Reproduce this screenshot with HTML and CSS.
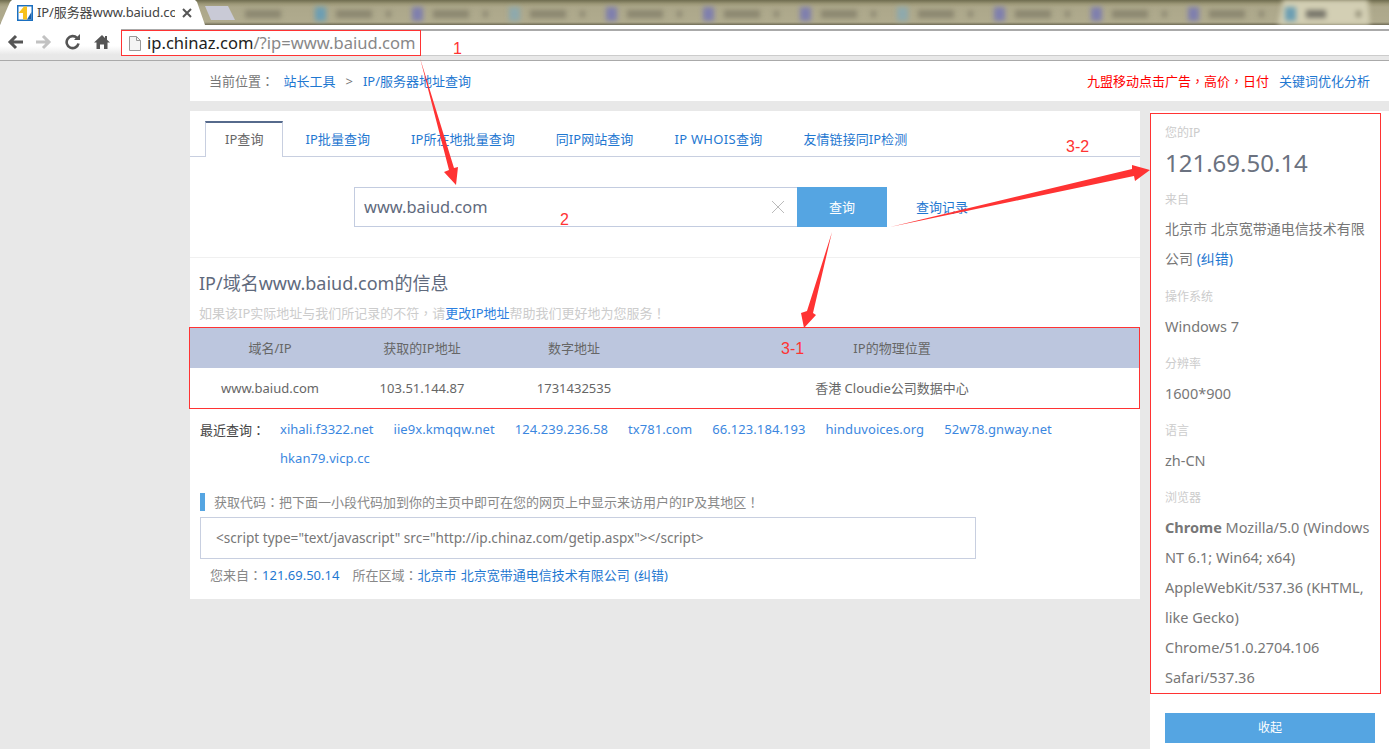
FILE: index.html
```html
<!DOCTYPE html>
<html lang="zh-CN">
<head>
<meta charset="utf-8">
<title>IP/服务器www.baiud.com</title>
<link rel="stylesheet" href="styles.css">
</head>
<body>
<header class="browser">
  <div class="tabstrip">
    <div class="tab">
      <svg class="favicon" width="16" height="16" viewBox="0 0 16 16"><rect width="16" height="16" fill="#1a6fc0"/><rect x="1.500" y="1.500" width="13" height="13" fill="#fff"/><path d="M1.500 8 7 1.500h3v13H6V8z" fill="#f7c11c"/><path d="M10 14.500 14.500 7v7.500z" fill="#1a5fa8"/></svg>
      <span class="tab-title">IP/服务器www.baiud.com</span>
      <svg class="tab-close" width="10" height="10" viewBox="0 0 10 10"><path d="M1 1l8 8M9 1 1 9" stroke="#555" stroke-width="2"/></svg>
    </div>
    <div class="newtab"></div>
    <div class="bgtabs">
      <div class="bgtab first"><span class="bg-text"></span></div>
      <div class="bgtab"><span class="bg-icon teal"></span><span class="bg-text"></span><span class="bg-dot"></span></div>
      <div class="bgtab"><span class="bg-icon purple"></span><span class="bg-text"></span><span class="bg-dot"></span></div>
      <div class="bgtab"><span class="bg-icon steel"></span><span class="bg-text"></span><span class="bg-dot"></span></div>
      <div class="bgtab"><span class="bg-icon purple"></span><span class="bg-text"></span><span class="bg-dot"></span></div>
      <div class="bgtab"><span class="bg-icon purple"></span><span class="bg-text"></span><span class="bg-dot"></span></div>
      <div class="bgtab"><span class="bg-icon purple"></span><span class="bg-text"></span><span class="bg-dot"></span></div>
      <div class="bgtab"><span class="bg-icon steel"></span><span class="bg-text"></span><span class="bg-dot"></span></div>
      <div class="bgtab"><span class="bg-icon purple"></span><span class="bg-text"></span><span class="bg-dot"></span></div>
      <div class="bgtab"><span class="bg-icon purple"></span><span class="bg-text"></span><span class="bg-dot"></span></div>
      <div class="bgtab"><span class="bg-icon purple"></span><span class="bg-text"></span><span class="bg-dot"></span></div>
      <div class="bgtab lit"><span class="bg-icon teal"></span><span class="bg-text short"></span><span class="bg-dot"></span></div>
    </div>
  </div>
  <div class="toolbar">
    <svg class="nav" width="18" height="16" viewBox="0 0 18 16"><path d="M17 8H5M10 2 4 8l6 6" fill="none" stroke="#555" stroke-width="3"/></svg>
    <svg class="nav" width="18" height="16" viewBox="0 0 18 16"><path d="M1 8h12M8 2l6 6-6 6" fill="none" stroke="#c2c2c2" stroke-width="3"/></svg>
    <svg class="nav" width="18" height="16" viewBox="0 0 18 16"><path d="M14.500 9.500A6 6 0 1 1 13 4" fill="none" stroke="#555" stroke-width="2.600"/><path d="M10 6h6V0z" fill="#555"/></svg>
    <svg class="nav" width="18" height="16" viewBox="0 0 18 16"><path d="M9 1 1 8.500h2.500V15H7v-4.500h4V15h3.500V8.500H17l-3-2.800V2h-2v1.900z" fill="#555"/></svg>
    <div class="omnibox">
      <svg class="page-icon" width="12" height="15" viewBox="0 0 12 15"><path d="M.5.500h7l4 4v10H.5z" fill="#f4f4f4" stroke="#999"/><path d="M7.500.500v4h4" fill="none" stroke="#999"/></svg>
      <span class="url"><b>ip.chinaz.com</b>/?ip=www.baiud.com</span>
    </div>
  </div>
</header>

<div class="page">
  <div class="crumbs">
    <div class="crumb-left">当前位置<span class="pu" lang="zh-TW">：</span> <a href="#" class="crumb-link">站长工具</a><span class="crumb-sep">&gt;</span><a href="#">IP/服务器地址查询</a></div>
    <div class="crumb-right"><a href="#" class="red">九盟移动点击广告<span class="pu" lang="zh-TW">，</span>高价<span class="pu" lang="zh-TW">，</span>日付</a><a href="#">关键词优化分析</a></div>
  </div>
  <div class="columns">
    <main class="panel">
      <nav class="tabs">
        <a href="#" class="tabs-item active">IP查询</a>
        <a href="#" class="tabs-item">IP批量查询</a>
        <a href="#" class="tabs-item">IP所在地批量查询</a>
        <a href="#" class="tabs-item">同IP网站查询</a>
        <a href="#" class="tabs-item wide">IP WHOIS查询</a>
        <a href="#" class="tabs-item">友情链接同IP检测</a>
      </nav>
      <div class="search">
        <div class="search-input">
          <span>www.baiud.com</span>
          <svg width="14" height="14" viewBox="0 0 14 14"><path d="M1 1l12 12M13 1 1 13" stroke="#bbb" stroke-width="1"/></svg>
        </div>
        <button class="search-btn">查询</button>
        <a href="#" class="search-log">查询记录</a>
      </div>
      <section class="info">
        <h1>IP/域名www.baiud.com的信息</h1>
        <p class="hint">如果该IP实际地址与我们所记录的不符<span class="pu" lang="zh-TW">，</span>请<a href="#">更改IP地址</a>帮助我们更好地为您服务<span class="pu" lang="zh-TW">！</span></p>
      </section>
      <div class="table">
        <div class="row head"><span>域名/IP</span><span>获取的IP地址</span><span>数字地址</span><span>IP的物理位置</span></div>
        <div class="row"><span>www.baiud.com</span><span>103.51.144.87</span><span>1731432535</span><span>香港 Cloudie公司数据中心</span></div>
      </div>
      <div class="recent">
        <span class="recent-label">最近查询<span class="pu" lang="zh-TW">：</span></span>
        <div class="recent-links">
          <a href="#">xihali.f3322.net</a><a href="#">iie9x.kmqqw.net</a><a href="#">124.239.236.58</a><a href="#">tx781.com</a><a href="#">66.123.184.193</a><a href="#">hinduvoices.org</a><a href="#">52w78.gnway.net</a><a href="#">hkan79.vicp.cc</a>
        </div>
      </div>
      <h2 class="code-title">获取代码<span class="pu" lang="zh-TW">：</span>把下面一小段代码加到你的主页中即可在您的网页上中显示来访用户的IP及其地区<span class="pu" lang="zh-TW">！</span></h2>
      <div class="code-box">&lt;script type="text/javascript" src="http://ip.chinaz.com/getip.aspx"&gt;&lt;/script&gt;</div>
      <p class="origin">您来自<span class="pu" lang="zh-TW">：</span><a href="#">121.69.50.14</a><span class="origin-gap">所在区域<span class="pu" lang="zh-TW">：</span></span><a href="#" class="origin-place">北京市 北京宽带通电信技术有限公司 (纠错)</a></p>
    </main>
    <aside class="side">
      <dl class="side-list">
        <dt>您的IP</dt>
        <dd class="ip">121.69.50.14</dd>
        <dt>来自</dt>
        <dd>北京市 北京宽带通电信技术有限公司 <a href="#">(纠错)</a></dd>
        <dt>操作系统</dt>
        <dd class="latin">Windows 7</dd>
        <dt>分辨率</dt>
        <dd class="latin">1600*900</dd>
        <dt>语言</dt>
        <dd class="latin">zh-CN</dd>
        <dt>浏览器</dt>
        <dd class="latin"><strong>Chrome</strong> Mozilla/5.0 (Windows NT 6.1; Win64; x64) AppleWebKit/537.36 (KHTML, like Gecko) Chrome/51.0.2704.106 Safari/537.36</dd>
      </dl>
      <button class="collapse">收起</button>
    </aside>
  </div>
</div>

<div class="marks">
  <svg class="arrows" width="1389" height="749" viewBox="0 0 1389 749">
    <rect x="121.500" y="30.500" width="299" height="25" fill="none" stroke="#f33"/>
    <rect x="189.500" y="327.500" width="950" height="81" fill="none" stroke="#f33"/>
    <rect x="1150.500" y="113.500" width="230" height="580" fill="none" stroke="#f33"/>
    <polygon points="420,58 454,168 458,167 456,185 444,172 449,170" fill="#f33"/>
    <polygon points="832,232 813,313 816,315 804,328 801,313 807,311" fill="#f33"/>
    <polygon points="890,227 1132,169 1132,165 1150,170 1135,181 1134,176" fill="#f33"/>
  </svg>
  <span class="mark m1">1</span>
  <span class="mark m2">2</span>
  <span class="mark m3">3-1</span>
  <span class="mark m4">3-2</span>
</div>
</body>
</html>
```
FILE: styles.css
```css
* { box-sizing: border-box; }
html, body { margin: 0; padding: 0; }
body {
  background: #e8e8e8;
  color: #666;
  font: 13px/1.5 "Noto Sans", "Noto Sans CJK SC", sans-serif;
  height: 749px;
  overflow: hidden;
  position: relative;
}
a { color: #1f78d1; text-decoration: none; }
.pu { font-family: "Noto Sans CJK TC", sans-serif; }

/* browser chrome */
.browser { height: 61px; }
.tabstrip {
  height: 25px;
  display: flex;
  align-items: flex-end;
  background: linear-gradient(#6f6c4f, #9d9878 4px, #aca78a 7px, #b0ab8e 22px, #6f6b55 25px);
  overflow: hidden;
}
.tab {
  width: 205px;
  height: 25px;
  flex: none;
  background: #fff;
  clip-path: polygon(0 100%, 10px 2px, 12px 0, 195px 0, 197px 2px, 205px 100%);
  display: flex;
  align-items: center;
  padding-left: 17px;
  color: #444;
  font-size: 13px;
}
.favicon { flex: none; }
.tab-title {
  width: 138px;
  margin-left: 4px;
  letter-spacing: -.1px;
  white-space: nowrap;
  overflow: hidden;
}
.tab-close { flex: none; margin-left: 7px; }
.newtab {
  width: 30px;
  height: 14px;
  flex: none;
  margin-bottom: 5px;
  background: #c9cad6;
  clip-path: polygon(0 0, 23px 0, 30px 100%, 6px 100%);
}
.bgtabs {
  display: flex;
  flex: none;
  height: 25px;
  margin-left: 5px;
  filter: blur(2.400px);
}
.bgtab {
  width: 97px;
  height: 25px;
  flex: none;
  display: flex;
  align-items: center;
  padding: 2px 6px 0 7px;
}
.bgtab.first { width: 68px; padding-left: 5px; }
.bgtab.lit { background: #d3cfb4; clip-path: polygon(0 100%, 5px 0, 90px 0, 92px 100%, 97px 100%); }
.bg-icon { width: 11px; height: 14px; flex: none; }
.teal { background: #6c9eb3; }
.purple { background: #7f7fae; }
.steel { background: #8ea9ad; }
.bg-text { width: 36px; height: 8px; margin-left: 10px; background: #8b8770; }
.bgtab.first .bg-text { margin-left: 0; }
.bg-text.short { width: 20px; background: #77756a; }
.bg-dot { width: 5px; height: 6px; margin-left: auto; margin-right: 8px; background: #8b8770; }

.toolbar {
  height: 36px;
  display: flex;
  align-items: flex-start;
  padding: 0 0 0 6px;
  gap: 11px;
  background: linear-gradient(#fff 60%, #e8e8e8 85%);
  border-bottom: 1px solid #aaa;
}
.nav { flex: none; margin-top: 9px; }
.omnibox {
  flex: 1;
  height: 27px;
  margin: 4px 0 0 -1px;
  border-top: 2px solid #aaa;
  border-bottom: 1px solid #ccc;
  background: #fff;
  display: flex;
  align-items: center;
  padding-left: 8px;
}
.page-icon { flex: none; }
.url { margin-left: 6px; font-size: 16.560px; color: #888; white-space: nowrap; }
.url b { font-weight: 400; color: #222; }

/* layout */
.page { padding-left: 190px; }
.crumbs {
  height: 40px;
  background: #fff;
  display: flex;
  justify-content: space-between;
  align-items: center;
  padding: 0 19px 0 19px;
  color: #777;
}
.crumb-link { margin-left: 6px; }
.crumb-sep { margin: 0 10px; color: #777; }
.crumb-right .red { color: #f00; margin-right: 10px; }
.columns { display: flex; gap: 10px; margin-top: 10px; align-items: flex-start; }
.panel { width: 950px; height: 488px; background: #fff; padding-top: 10px; }

/* tabs */
.tabs {
  height: 36px;
  border-bottom: 1px solid #c8cfe0;
  display: flex;
  padding-left: 15px;
  gap: 1px;
}
.tabs-item { padding: 0 20px; line-height: 36px; height: 36px; white-space: nowrap; letter-spacing: .05px; }
.tabs-item.wide { letter-spacing: .3px; }
.tabs-item.active {
  padding: 0 19px;
  border: 1px solid #c8cfe0;
  border-top: 2px solid #566a8c;
  border-bottom: 0;
  background: #fff;
  color: #666;
  line-height: 32px;
  margin-right: 1px;
}

/* search */
.search {
  display: flex;
  align-items: flex-start;
  height: 101px;
  padding: 30px 0 0 164px;
  border-bottom: 1px solid #f0f0f0;
}
.search-input {
  width: 443px;
  height: 40px;
  border: 1px solid #c3cce0;
  border-right: 0;
  display: flex;
  align-items: center;
  justify-content: space-between;
  padding: 0 12px 0 9px;
  font-size: 16.400px;
  color: #5f6a7d;
}
.search-btn {
  width: 90px;
  height: 40px;
  border: 0;
  background: #55a5e2;
  color: #fff;
  font: inherit;
  padding-top: 2px;
}
.search-log { margin-left: 29px; line-height: 40px; }

/* info */
.info { padding: 12px 9px 0; height: 70px; }
.info h1 { margin: 0; font-size: 18px; font-weight: 400; color: #5f6a7d; line-height: 27px; }
.hint { margin: 6px 0 0; color: #ccc; line-height: 20px; }
.hint a { color: #2b7fe0; }

/* table */
.table { width: 950px; }
.row {
  display: grid;
  grid-template-columns: 160px 144px 160px 476px;
  height: 40px;
  align-items: center;
  text-align: center;
  padding-top: 1px;
}
.row.head { background: #bcc6de; }

/* recent */
.recent { display: flex; padding: 7px 0 0 10px; line-height: 29px; }
.recent-label { width: 80px; flex: none; color: #444; }
.recent-links { display: flex; flex-wrap: wrap; column-gap: 20px; flex: 1; padding-right: 60px; letter-spacing: .07px; }
.recent-links a { color: #3b87e0; }
.recent-links a:first-child { letter-spacing: 0; }

/* code */
.code-title {
  margin: 20px 0 0 10px;
  padding-left: 9px;
  border-left: 5px solid #55a5e2;
  font-size: 13px;
  font-weight: 400;
  color: #888;
  line-height: 17px;
}
.code-box {
  width: 776px;
  height: 42px;
  margin: 6px 0 0 10px;
  border: 1px solid #c8cfe0;
  padding-left: 15px;
  line-height: 40px;
  color: #777;
  font-size: 13.600px;
}
.origin { margin: 6px 0 0 20px; line-height: 20px; color: #888; }
.origin-gap { margin-left: 13px; }
.origin-place { word-spacing: 1px; }

/* sidebar */
.side { width: 239px; height: 638px; background: #fff; padding: 6px 14px 0 15px; }
.side-list { margin: 0; height: 596px; }
.side dt { font-size: 12px; color: #ccc; line-height: 28px; padding-top: 2px; }
.side dd { margin: 0 0 7px; line-height: 30px; color: #777; font-size: 14px; }
.side dd.latin { font-size: 14.500px; }
.side dd a { color: #1f78d1; }
.side dd strong { color: #777; }
.side dd.ip { font-size: 24px; line-height: 32px; margin-bottom: 5px; color: #6b7280; }
.collapse {
  display: block;
  width: 210px;
  height: 30px;
  border: 0;
  background: #55a5e2;
  color: #fff;
  font: inherit;
  font-size: 12px;
}

/* annotations */
.marks { position: absolute; inset: 0; pointer-events: none; }
.arrows { position: absolute; left: 0; top: 0; }
.mark { position: absolute; color: #f33; font-size: 16px; line-height: 20px; font-family: "Liberation Sans", sans-serif; }
.m1 { left: 453px; top: 39px; }
.m2 { left: 560px; top: 210px; }
.m3 { left: 781px; top: 339px; }
.m4 { left: 1066px; top: 137px; }
```
